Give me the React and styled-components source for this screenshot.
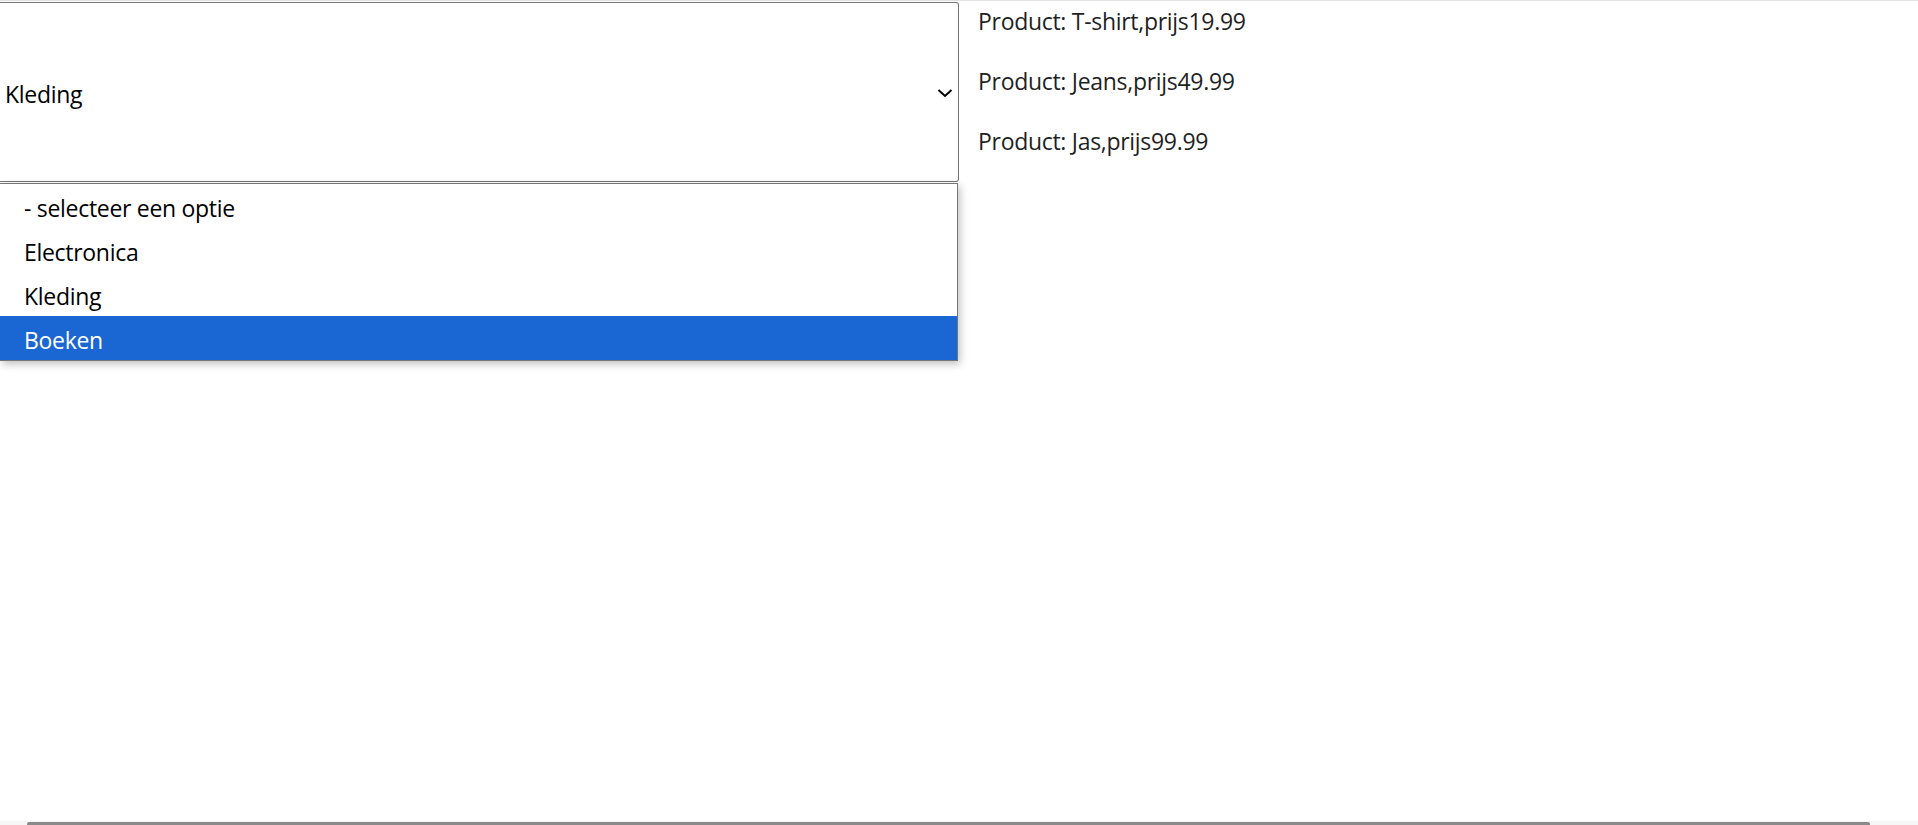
import React from 'react';
import styled, { createGlobalStyle } from 'styled-components';

const GlobalStyle = createGlobalStyle`
  html, body {
    margin: 0;
    padding: 0;
    background: #fff;
    overflow: hidden;
  }
  body {
    font-family: 'Open Sans', 'Noto Sans', sans-serif;
    color: #000;
    border-top: 1px solid #e3e3e3;
    height: 824px;
  }
`;

const Page = styled.main`
  display: flex;
  align-items: flex-start;
  padding-top: 1px;
`;

const SelectWrap = styled.div`
  position: relative;
  width: 959px;
  flex: none;
`;

const SelectBox = styled.div`
  display: flex;
  align-items: center;
  justify-content: space-between;
  box-sizing: border-box;
  height: 180px;
  padding: 4px 5px 0 5px;
  border: 1px solid #767676;
  border-left: none;
  border-radius: 0 3px 3px 0;
  background: #fff;
  font-size: 23px;
  letter-spacing: -0.3px;
`;

const Chevron = styled.svg`
  width: 16px;
  height: 16px;
  margin-bottom: 2px;
`;

const OptionList = styled.ul`
  position: absolute;
  top: 181px;
  left: 0;
  width: 958px;
  margin: 0;
  padding: 0;
  list-style: none;
  box-sizing: border-box;
  background: #fff;
  border: 1px solid #767676;
  border-left: none;
  box-shadow: 2px 3px 8px rgba(0, 0, 0, 0.25);
  z-index: 2;
`;

const Option = styled.li`
  height: 44px;
  box-sizing: border-box;
  display: flex;
  align-items: center;
  padding: 4px 0 0 24px;
  font-size: 23px;
  letter-spacing: -0.3px;
  background: ${p => (p.$active ? '#1a67d3' : 'transparent')};
  color: ${p => (p.$active ? '#fff' : '#000')};
`;

const Products = styled.div`
  padding-left: 19px;
  padding-top: 3px;
`;

const ProductLine = styled.p`
  margin: 0 0 28px;
  font-size: 23px;
  line-height: 32px;
  letter-spacing: -0.3px;
  color: #1f1f1f;
`;

const ScrollTrack = styled.div`
  position: fixed;
  left: 0;
  right: 0;
  bottom: 0;
  height: 4px;
  background: #f6f6f6;
  display: flex;
  align-items: flex-end;
  padding: 0 48px 0 27px;
`;

const ScrollThumb = styled.div`
  flex: 1;
  height: 3px;
  background: #8a8a8a;
  border-radius: 2px 2px 0 0;
`;

const options = ['- selecteer een optie', 'Electronica', 'Kleding', 'Boeken'];
const products = [
  { name: 'T-shirt', price: 19.99 },
  { name: 'Jeans', price: 49.99 },
  { name: 'Jas', price: 99.99 },
];

export default function App() {
  return (
    <>
      <GlobalStyle />
      <Page>
        <SelectWrap>
          <SelectBox>
            <span>Kleding</span>
            <Chevron viewBox="0 0 16 16" fill="none">
              <path d="M1.5 5 L8 11 L14.5 5" stroke="#000" strokeWidth="2" />
            </Chevron>
          </SelectBox>
          <OptionList>
            {options.map(o => (
              <Option key={o} $active={o === 'Boeken'}>
                {o}
              </Option>
            ))}
          </OptionList>
        </SelectWrap>
        <Products>
          {products.map(p => (
            <ProductLine key={p.name}>
              Product: {p.name},prijs{p.price}
            </ProductLine>
          ))}
        </Products>
      </Page>
      <ScrollTrack>
        <ScrollThumb />
      </ScrollTrack>
    </>
  );
}
